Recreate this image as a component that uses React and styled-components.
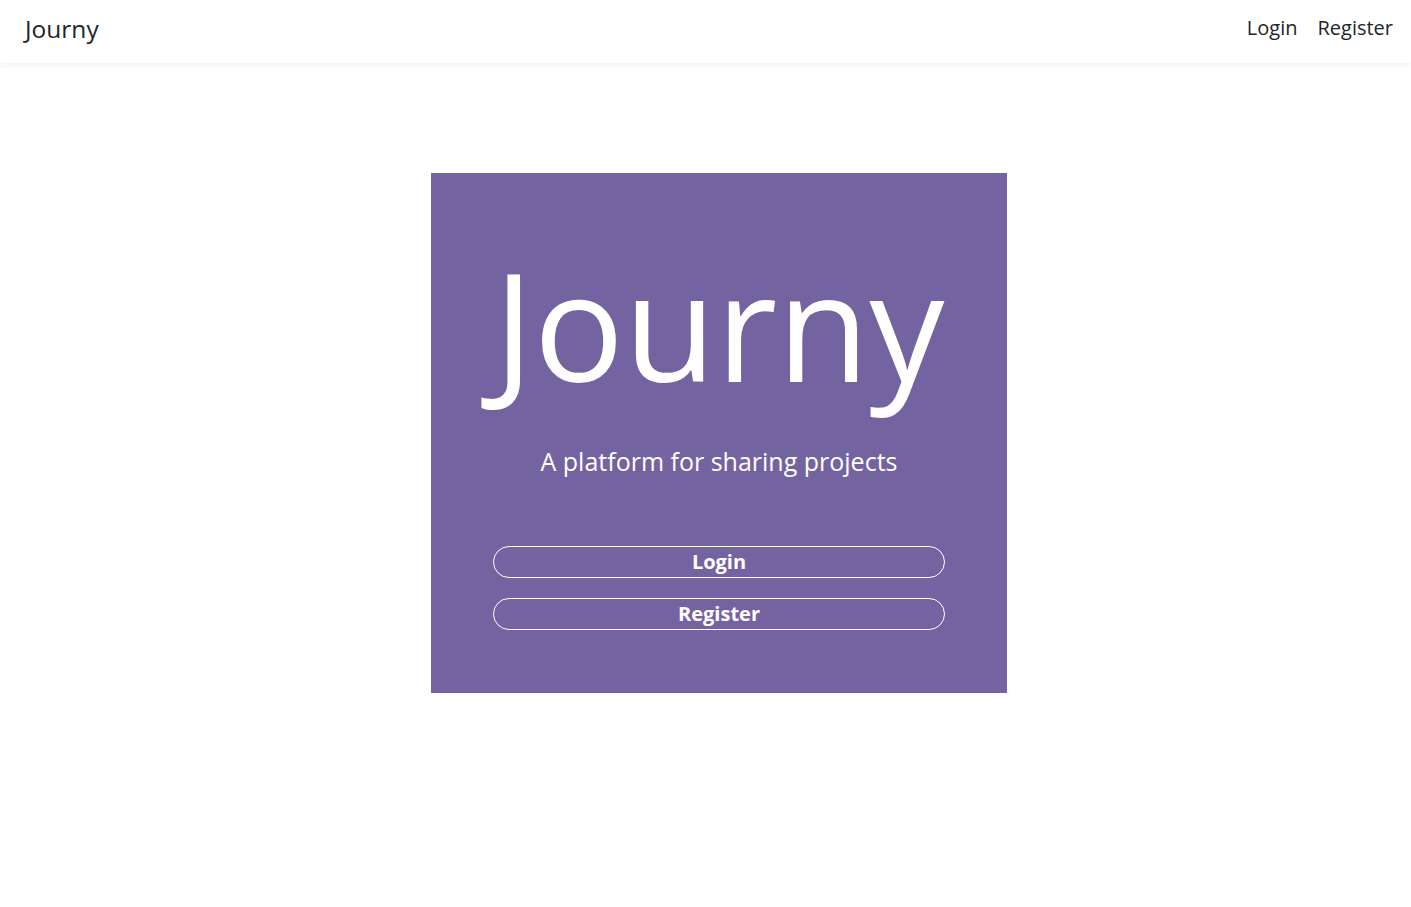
import React from 'react'
import styled, { createGlobalStyle } from 'styled-components'

const GlobalStyle = createGlobalStyle`
    body {
        margin: 0;
        font-family: "Open Sans", "Noto Sans", sans-serif;
        background: #fff;
        color: #212529;
    }
`

function App() {
    return (
        <>
            <GlobalStyle />
            <Navbar>
                <Brand>Journy</Brand>
                <NavLinks>
                    <NavLink>Login</NavLink>
                    <NavLink>Register</NavLink>
                </NavLinks>
            </Navbar>
            <Main>
                <Hero>
                    <HeroTitle>Journy</HeroTitle>
                    <Tagline>A platform for sharing projects</Tagline>
                    <Buttons>
                        <OutlineButton>Login</OutlineButton>
                        <OutlineButton>Register</OutlineButton>
                    </Buttons>
                </Hero>
            </Main>
        </>
    )
}

export default App;

const Navbar = styled.nav`
    height: 63px;
    display: flex;
    align-items: center;
    justify-content: space-between;
    padding: 0 18px 0 25px;
    box-shadow: 0 2px 6px rgba(0,0,0,0.06);
    box-sizing: border-box;
`

const Brand = styled.div`
    font-size: 24.5px;
    color: #212529;
    margin-top: -7px;
`

const NavLinks = styled.div`
    display: flex;
    gap: 20px;
    margin-top: -8px;
`

const NavLink = styled.a`
    font-size: 20px;
    color: #212529;
    cursor: pointer;
`

const Main = styled.main`
    display: flex;
    justify-content: center;
    padding: 110px 0 0 27px;
`

const Hero = styled.section`
    width: 576px;
    height: 520px;
    background-color: #7463a1;
    color: #fff;
    display: flex;
    flex-direction: column;
    align-items: center;
    padding: 0 62px;
    box-sizing: border-box;
`

const HeroTitle = styled.h1`
    font-size: 150px;
    font-weight: 400;
    line-height: 1;
    margin: 76px 0 0 0;
`

const Tagline = styled.p`
    font-size: 25px;
    margin: 45px 0 0;
`

const Buttons = styled.div`
    width: 100%;
    display: flex;
    flex-direction: column;
    gap: 20px;
    margin-top: 68px;
`

const OutlineButton = styled.button`
    width: 100%;
    height: 32px;
    border: 1px solid #fff;
    border-radius: 16px;
    background: transparent;
    color: #fff;
    font-family: "Open Sans", sans-serif;
    font-size: 20px;
    font-weight: 700;
    line-height: 1;
    cursor: pointer;
`
